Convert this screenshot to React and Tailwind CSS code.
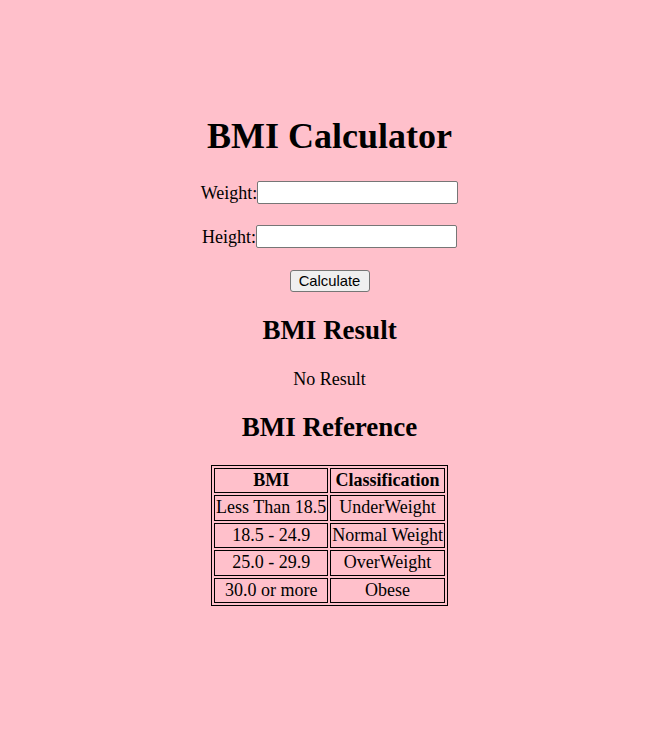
import React from 'react';

const rows = [
  ['Less Than 18.5', 'UnderWeight'],
  ['18.5 - 24.9', 'Normal Weight'],
  ['25.0 - 29.9', 'OverWeight'],
  ['30.0 or more', 'Obese'],
];

const Field = ({ label, className }) => (
  <div className={`flex items-center justify-center h-[23px] ${className}`}>
    <span className="text-[18px] leading-[20px]">{label}</span>
    <input
      type="text"
      className="w-[201px] h-[23px] bg-white border border-[#767676] rounded-[2px] px-[2px] text-[14.6px] outline-none"
    />
  </div>
);

const App = () => {
  return (
    <div className="min-h-[745px] bg-[#ffc0cb] pt-[116px] pr-[3px] text-center text-black font-['Liberation_Serif',serif]">
      <h1 className="text-[36px] leading-[40px] font-bold">BMI Calculator</h1>

      <Field label="Weight:" className="mt-[25px]" />
      <Field label="Height:" className="mt-[21px]" />

      <div className="mt-[22px] flex justify-center">
        <button className="w-[80px] h-[22px] bg-[#efefef] border border-[#767676] rounded-[3px] text-[14.8px] leading-[18px] font-['Liberation_Sans',Arial,sans-serif]">
          Calculate
        </button>
      </div>

      <h2 className="mt-[23px] text-[27px] leading-[30px] font-bold">BMI Result</h2>
      <p className="mt-[24px] text-[18px] leading-[20px]">No Result</p>

      <h2 className="mt-[23px] text-[27px] leading-[30px] font-bold">BMI Reference</h2>

      <div className="mt-[23px] flex justify-center">
        <table className="border-separate border-spacing-[2px] border border-black text-[18px]">
          <thead>
            <tr>
              <th className="border border-black px-[1px] pt-[1px] pb-[1.4px] leading-[21px] font-bold">BMI</th>
              <th className="border border-black px-[1px] pt-[1px] pb-[1.4px] leading-[21px] font-bold">Classification</th>
            </tr>
          </thead>
          <tbody>
            {rows.map(([bmi, cls]) => (
              <tr key={bmi}>
                <td className="border border-black px-[1px] pt-[1px] pb-[1.4px] leading-[21px]">{bmi}</td>
                <td className="border border-black px-[1px] pt-[1px] pb-[1.4px] leading-[21px]">{cls}</td>
              </tr>
            ))}
          </tbody>
        </table>
      </div>
    </div>
  );
};

export default App;
